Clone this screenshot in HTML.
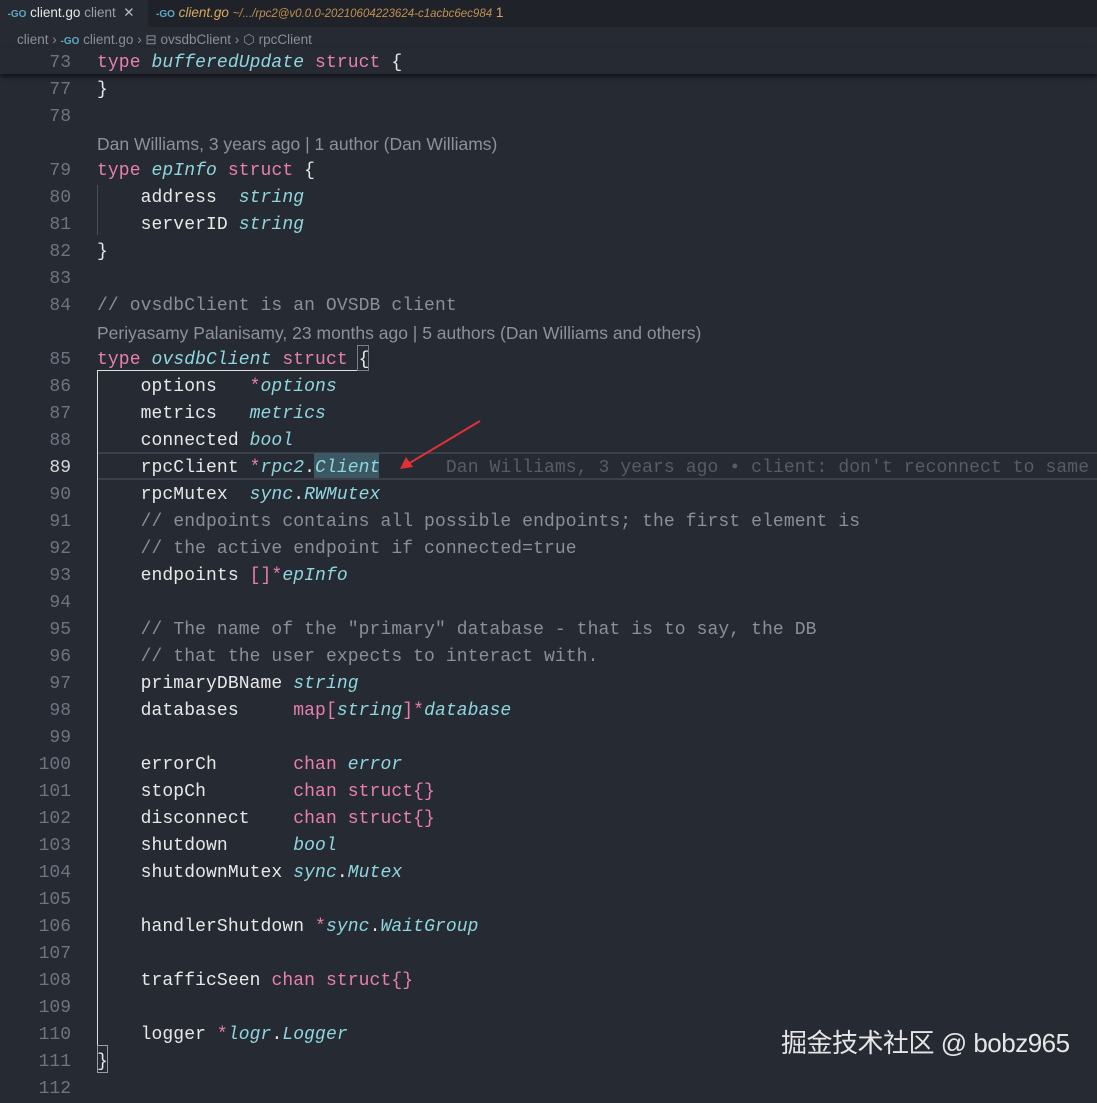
<!DOCTYPE html>
<html><head><meta charset="utf-8"><style>
body{margin:0;width:1097px;height:1083px;overflow:hidden;background:#262a33;position:relative;font-family:"Liberation Sans",sans-serif}
.tabs{position:absolute;left:0;top:0;width:1097px;height:27px;background:#1f2229}
.tab1{position:absolute;left:0;top:0;width:148px;height:27px;background:#262a33;color:#e6e6e6;font-size:13.5px;line-height:25px;white-space:nowrap}
.tab2{position:absolute;left:156px;top:0;height:27px;color:#d9a860;font-size:13.5px;line-height:25px;font-style:italic;white-space:nowrap}
.go{color:#5aa9c4;font-size:10px;font-weight:bold;font-style:normal}
.bc{position:absolute;left:17px;top:32px;color:#8a8e98;font-size:13.5px;white-space:nowrap}
.row{position:absolute;left:0;height:27px;line-height:27px;width:1097px;white-space:pre;padding-top:3px;box-sizing:border-box}
.ln{position:absolute;left:0;width:71px;text-align:right;color:#6f7480;font-family:"Liberation Mono",monospace;font-size:18px}
.code{position:absolute;left:97px;color:#e8e8e8;font-family:"Liberation Mono",monospace;font-size:18px;letter-spacing:0.1px}
.bl{position:absolute;left:97px;color:#8d919a;font-size:17.5px}
.k{color:#e87fb0}.t{color:#8fd6df;font-style:italic}.c{color:#8a8f99}
.sticky{position:absolute;left:0;top:47px;width:1097px;height:27px;background:#262a33;box-shadow:0 3px 4px rgba(0,0,0,.55);z-index:2}
</style></head><body>
<div class="tabs">
<div class="tab1">&nbsp;&nbsp;<span class="go">-GO</span> client.go <span style="color:#9a9ea8">client</span> &nbsp;<span style="color:#bbb">✕</span></div>
<div class="tab2"><span class="go">-GO</span> client.go <span style="font-size:11.5px;color:#c09050">~/.../rpc2@v0.0.0-20210604223624-c1acbc6ec984</span> <span style="font-style:normal">1</span></div>
</div>
<div class="bc">client › <span class="go">-GO</span> client.go › ⊟ ovsdbClient › ⬡ rpcClient</div>

<div class="sticky"><div class="row" style="top:0"><span class="ln">73</span><span class="code"><span class="k">type</span> <span class="t">bufferedUpdate</span> <span class="k">struct</span> {</span></div></div>

<div class="row" style="top:74px"><span class="ln">77</span><span class="code">}</span></div>
<div class="row" style="top:101px"><span class="ln">78</span></div>
<div class="row" style="top:128px"><span class="bl">Dan Williams, 3 years ago | 1 author (Dan Williams)</span></div>
<div class="row" style="top:155px"><span class="ln">79</span><span class="code"><span class="k">type</span> <span class="t">epInfo</span> <span class="k">struct</span> {</span></div>
<div class="row" style="top:182px"><span class="ln">80</span><span class="code">    address  <span class="t">string</span></span></div>
<div class="row" style="top:209px"><span class="ln">81</span><span class="code">    serverID <span class="t">string</span></span></div>
<div class="row" style="top:236px"><span class="ln">82</span><span class="code">}</span></div>
<div style="position:absolute;left:97px;top:185px;width:1px;height:50px;background:#4a4e58"></div>
<div class="row" style="top:263px"><span class="ln">83</span></div>
<div class="row" style="top:290px"><span class="ln">84</span><span class="code"><span class="c">// ovsdbClient is an OVSDB client</span></span></div>
<div class="row" style="top:317px"><span class="bl">Periyasamy Palanisamy, 23 months ago | 5 authors (Dan Williams and others)</span></div>
<div class="row" style="top:344px"><span class="ln">85</span><span class="code"><span class="k">type</span> <span class="t">ovsdbClient</span> <span class="k">struct</span> {</span></div>
<div style="position:absolute;left:357px;top:345px;width:10px;height:24px;border:1px solid #7a7e88"></div>
<div style="position:absolute;left:97px;top:370px;width:260px;height:1px;background:#e0e0e0"></div>
<div style="position:absolute;left:97px;top:370px;width:1px;height:676px;background:#e0e0e0"></div>
<div style="position:absolute;left:97px;top:1045px;width:9px;height:26px;border:1px solid #9a9ea8"></div>
<div class="row" style="top:371px"><span class="ln">86</span><span class="code">    options   <span class="k">*</span><span class="t">options</span></span></div>
<div class="row" style="top:398px"><span class="ln">87</span><span class="code">    metrics   <span class="t">metrics</span></span></div>
<div class="row" style="top:425px"><span class="ln">88</span><span class="code">    connected <span class="t">bool</span></span></div>
<div style="position:absolute;left:98px;top:452px;width:999px;height:24px;border-top:2px solid #3b3f49;border-bottom:2px solid #3b3f49"></div>
<div style="position:absolute;left:314px;top:453px;width:65px;height:25px;background:#3c5963"></div>
<div class="row" style="top:452px"><span class="ln" style="color:#d8d8d8">89</span><span class="code">    rpcClient <span class="k">*</span><span class="t">rpc2</span>.<span class="t">Client</span>      <span style="color:#585c66">Dan Williams, 3 years ago • client: don't reconnect to same e</span></span></div>
<div class="row" style="top:479px"><span class="ln">90</span><span class="code">    rpcMutex  <span class="t">sync</span>.<span class="t">RWMutex</span></span></div>
<div class="row" style="top:506px"><span class="ln">91</span><span class="code">    <span class="c">// endpoints contains all possible endpoints; the first element is</span></span></div>
<div class="row" style="top:533px"><span class="ln">92</span><span class="code">    <span class="c">// the active endpoint if connected=true</span></span></div>
<div class="row" style="top:560px"><span class="ln">93</span><span class="code">    endpoints <span class="k">[]*</span><span class="t">epInfo</span></span></div>
<div class="row" style="top:587px"><span class="ln">94</span></div>
<div class="row" style="top:614px"><span class="ln">95</span><span class="code">    <span class="c">// The name of the "primary" database - that is to say, the DB</span></span></div>
<div class="row" style="top:641px"><span class="ln">96</span><span class="code">    <span class="c">// that the user expects to interact with.</span></span></div>
<div class="row" style="top:668px"><span class="ln">97</span><span class="code">    primaryDBName <span class="t">string</span></span></div>
<div class="row" style="top:695px"><span class="ln">98</span><span class="code">    databases     <span class="k">map[</span><span class="t">string</span><span class="k">]*</span><span class="t">database</span></span></div>
<div class="row" style="top:722px"><span class="ln">99</span></div>
<div class="row" style="top:749px"><span class="ln">100</span><span class="code">    errorCh       <span class="k">chan</span> <span class="t">error</span></span></div>
<div class="row" style="top:776px"><span class="ln">101</span><span class="code">    stopCh        <span class="k">chan struct{}</span></span></div>
<div class="row" style="top:803px"><span class="ln">102</span><span class="code">    disconnect    <span class="k">chan struct{}</span></span></div>
<div class="row" style="top:830px"><span class="ln">103</span><span class="code">    shutdown      <span class="t">bool</span></span></div>
<div class="row" style="top:857px"><span class="ln">104</span><span class="code">    shutdownMutex <span class="t">sync</span>.<span class="t">Mutex</span></span></div>
<div class="row" style="top:884px"><span class="ln">105</span></div>
<div class="row" style="top:911px"><span class="ln">106</span><span class="code">    handlerShutdown <span class="k">*</span><span class="t">sync</span>.<span class="t">WaitGroup</span></span></div>
<div class="row" style="top:938px"><span class="ln">107</span></div>
<div class="row" style="top:965px"><span class="ln">108</span><span class="code">    trafficSeen <span class="k">chan struct{}</span></span></div>
<div class="row" style="top:992px"><span class="ln">109</span></div>
<div class="row" style="top:1019px"><span class="ln">110</span><span class="code">    logger <span class="k">*</span><span class="t">logr</span>.<span class="t">Logger</span></span></div>
<div class="row" style="top:1046px"><span class="ln">111</span><span class="code">}</span></div>
<div class="row" style="top:1073px"><span class="ln">112</span></div>
<svg style="position:absolute;left:0;top:0" width="1097" height="1083"><line x1="480" y1="421" x2="408" y2="464" stroke="#e0303a" stroke-width="2"/><polygon points="400,469 406,457 413,467" fill="#e0303a"/></svg>
<div style="position:absolute;left:781px;top:1023px;color:#e6e6e6;font-size:26px;font-family:'Liberation Sans','Noto Sans CJK SC',sans-serif;white-space:nowrap;letter-spacing:-0.5px">掘金技术社区 @ bobz965</div>
</body></html>
